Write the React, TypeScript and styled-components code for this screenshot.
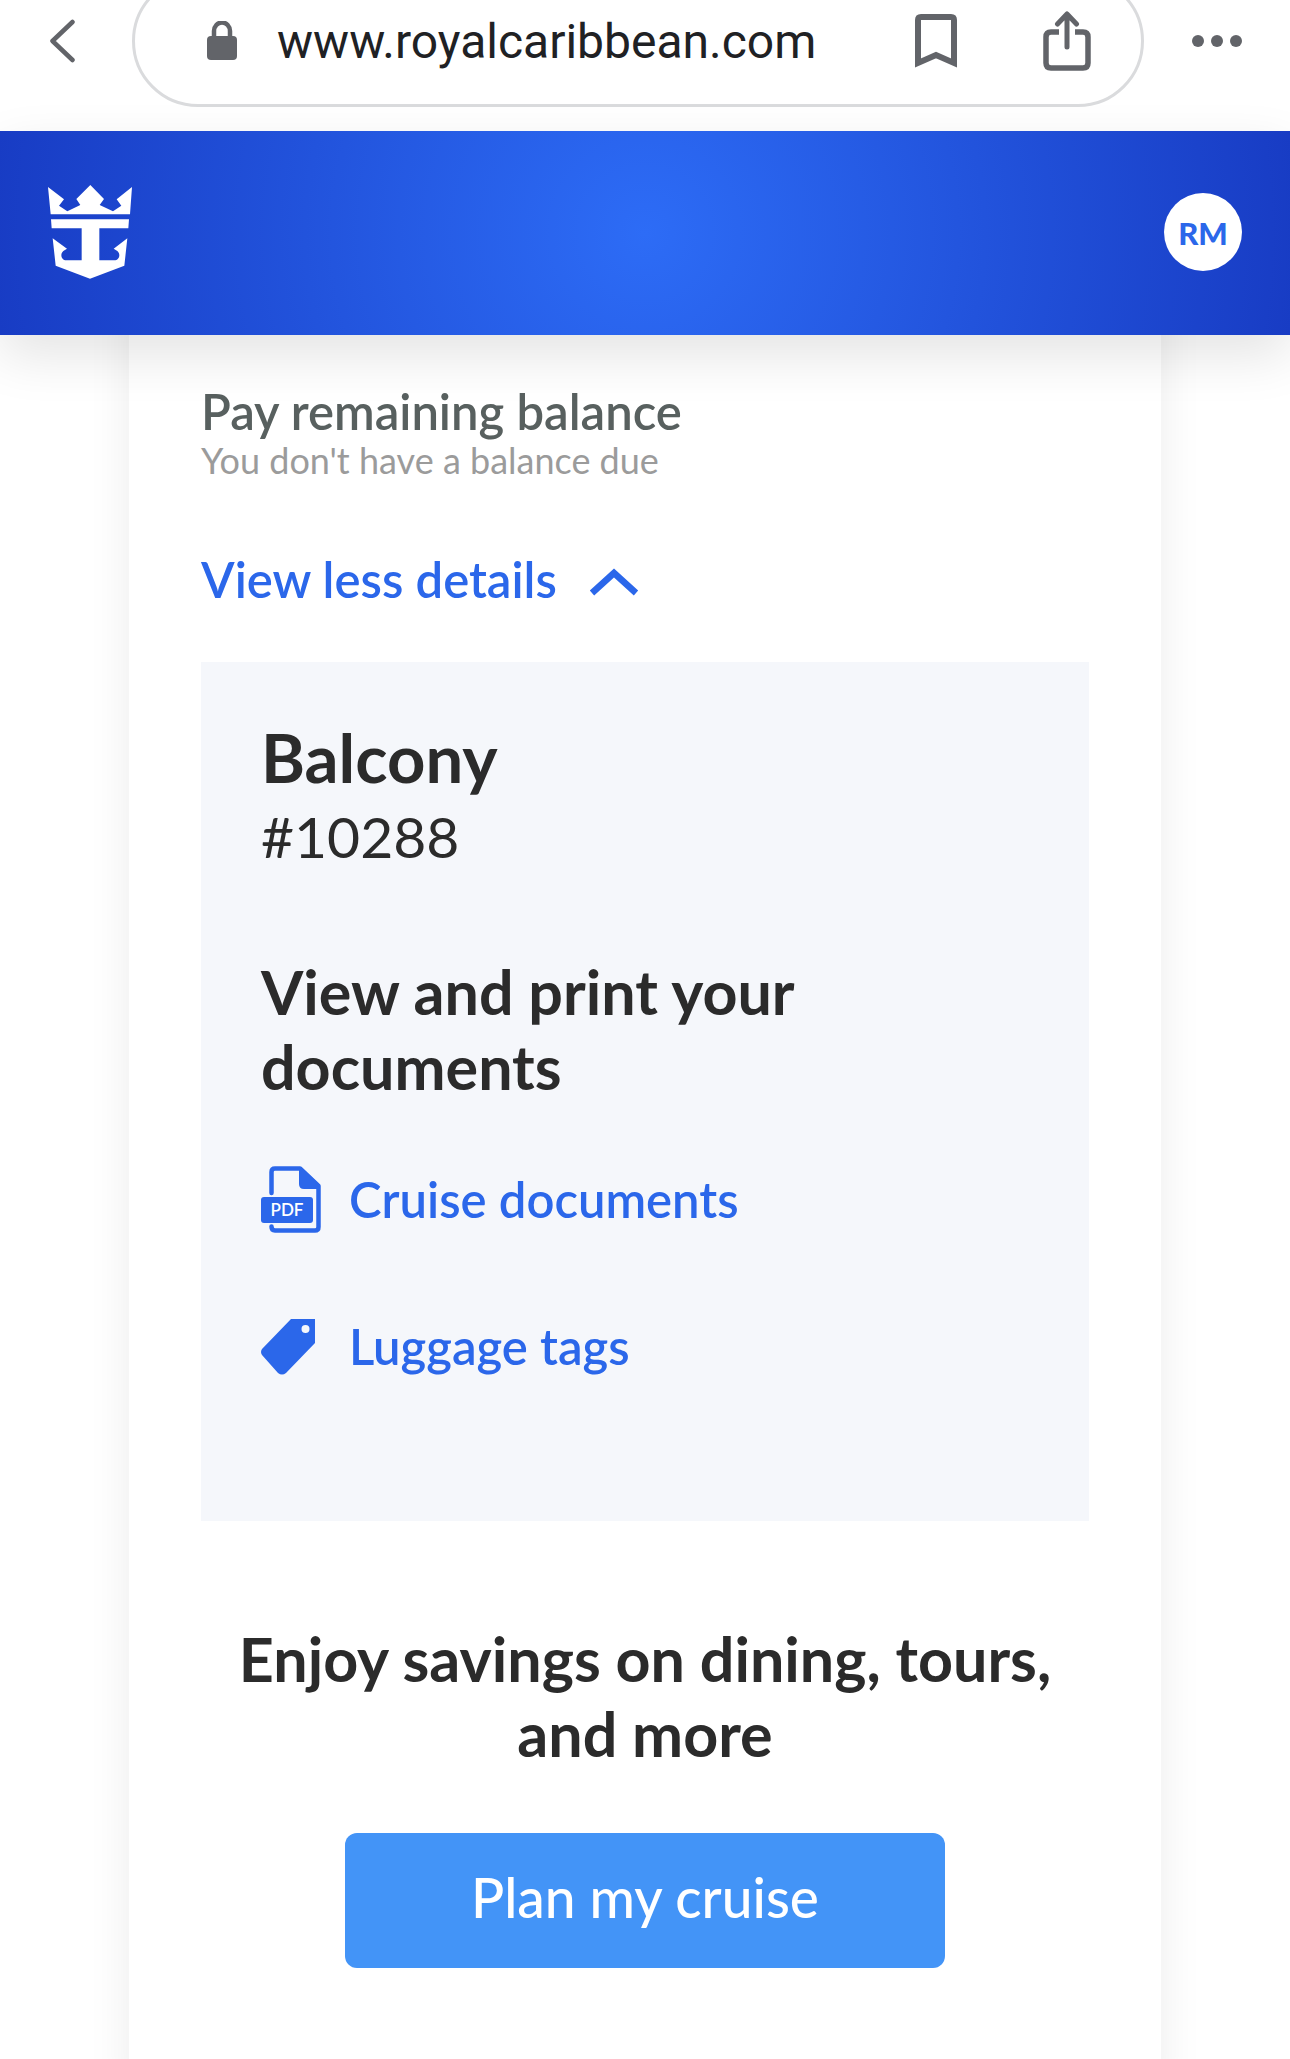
import React from "react";
import styled, { createGlobalStyle } from "styled-components";

const color = {
  link: "#2b67ea",
  ink: "#2b2b2b",
  slate: "#58605f",
  muted: "#9b9b9b",
  chrome: "#626469",
  panel: "#f5f7fb",
  action: "#4394f7",
};

const GlobalStyle = createGlobalStyle`
  * { box-sizing: border-box; }
  body {
    margin: 0;
    background: #fff;
    color: ${color.ink};
    font-family: Lato, "Open Sans", sans-serif;
  }
  button, input { font: inherit; }
  h2, h3, p, ul { margin: 0; padding: 0; }
  svg { display: block; flex: none; }
`;

const Page = styled.div`
  display: flex;
  flex-direction: column;
  min-height: 100vh;
  overflow: hidden;
`;

const BrowserBar = styled.div`
  display: flex;
  align-items: center;
  gap: 48px;
  margin-top: -25px;
  padding: 0 48px 24px;
  color: ${color.chrome};
`;

const IconButton = styled.button`
  display: flex;
  padding: 0;
  border: 0;
  background: none;
  color: inherit;
  cursor: pointer;
`;

const AddressPill = styled.div`
  display: flex;
  flex: 1;
  align-items: center;
  min-width: 0;
  height: 132px;
  padding: 0 50px 0 72px;
  border: 3px solid #dadbdd;
  border-radius: 66px;
`;

const AddressInput = styled.input`
  flex: 1;
  min-width: 0;
  margin: 0 40px;
  padding: 2px 0 0;
  border: 0;
  outline: 0;
  background: none;
  color: #202124;
  font-family: Roboto, sans-serif;
  font-size: 48px;
  line-height: 60px;
`;

const PillActions = styled.div`
  display: flex;
  align-items: center;
  gap: 86px;
`;

const SiteHeader = styled.header`
  position: relative;
  z-index: 1;
  display: flex;
  align-items: center;
  justify-content: space-between;
  height: 204px;
  padding: 0 48px 2px;
  background: radial-gradient(circle, #2d6cf6, #183cc4);
  box-shadow: 0 20px 50px rgba(0, 0, 0, 0.11);
`;

const HomeLink = styled.a`
  display: flex;
  color: #fff;
`;

const Avatar = styled.button`
  width: 78px;
  height: 78px;
  padding: 2px 0 0;
  border: 0;
  border-radius: 50%;
  background: #fff;
  color: ${color.link};
  font-size: 31px;
  font-weight: 900;
  line-height: 36px;
`;

const Card = styled.main`
  flex: 1;
  margin: -40px 10%;
  padding: 88px 72px 132px;
  background: #fff;
  box-shadow: 0 0 40px rgba(0, 0, 0, 0.08);
`;

const BalanceTitle = styled.h3`
  color: ${color.slate};
  font-size: 49px;
  font-weight: 600;
  line-height: 56px;
`;

const BalanceNote = styled.p`
  color: ${color.muted};
  font-size: 36px;
  line-height: 42px;
`;

const DetailsToggle = styled.button`
  display: flex;
  align-items: center;
  gap: 32px;
  margin: 70px 0 55px;
  padding: 0;
  border: 0;
  background: none;
  color: ${color.link};
  font-size: 49px;
  font-weight: 600;
  line-height: 56px;
`;

const DetailsPanel = styled.section`
  padding: 56px 60px 141px;
  background: ${color.panel};
`;

const RoomType = styled.h2`
  font-size: 67px;
  font-weight: 700;
  line-height: 78px;
`;

const RoomNumber = styled.p`
  font-size: 57px;
  line-height: 80px;
`;

const SectionTitle = styled.h3<{ $center?: boolean }>`
  font-size: 61px;
  font-weight: 700;
  line-height: 75px;
  text-align: ${(p) => (p.$center ? "center" : "left")};
`;

const Documents = styled.div`
  margin-top: 78px;
`;

const LinkList = styled.ul`
  display: grid;
  gap: 80px;
  margin-top: 62px;
  list-style: none;
`;

const DocumentLink = styled.a`
  display: grid;
  grid-template-columns: 60px auto;
  gap: 28px;
  align-items: center;
  justify-content: start;
  color: ${color.link};
  font-size: 49px;
  font-weight: 600;
  line-height: 67px;
  text-decoration: none;
`;

const Offer = styled.section`
  display: flex;
  flex-direction: column;
  align-items: center;
  gap: 62px;
  margin-top: 100px;
`;

const ActionButton = styled.button`
  width: 600px;
  max-width: 100%;
  height: 135px;
  padding: 0 24px 8px;
  border: 0;
  border-radius: 12px;
  background: ${color.action};
  color: #fff;
  font-size: 55px;
  font-weight: 500;
`;

function BackIcon() {
  return (
    <svg width="36" height="44" viewBox="0 0 36 44" fill="none" stroke="currentColor" strokeWidth="4.5" strokeLinecap="round" strokeLinejoin="round" aria-hidden="true">
      <path d="M24.500 3 4.500 22l20 19" />
    </svg>
  );
}

function LockIcon() {
  return (
    <svg width="30" height="40" viewBox="0 0 30 40" aria-hidden="true">
      <path d="M7 18v-8a8 8.500 0 0 1 16 0v8" fill="none" stroke="currentColor" strokeWidth="4.5" />
      <rect y="15" width="30" height="24" rx="4" fill="currentColor" />
    </svg>
  );
}

function BookmarkIcon() {
  return (
    <svg width="42" height="56" viewBox="0 0 42 56" fill="none" stroke="currentColor" strokeWidth="6" aria-hidden="true">
      <path d="M3 50V7q0-3 3-3h30q3 0 3 3v43L21 42z" />
    </svg>
  );
}

function ShareIcon() {
  return (
    <svg width="48" height="60" viewBox="0 0 48 60" fill="none" stroke="currentColor" strokeWidth="5.5" strokeLinejoin="round" aria-hidden="true">
      <path d="M16 21H8q-5 0-5 5v26q0 5 5 5h32q5 0 5-5V26q0-5-5-5h-8" />
      <path d="M24 36V4M14.500 13 24 3l9.500 10" strokeWidth="5" strokeLinecap="round" />
    </svg>
  );
}

function MoreIcon() {
  return (
    <svg width="50" height="14" viewBox="0 0 50 14" fill="currentColor" aria-hidden="true">
      <circle cx="6" cy="7" r="6" />
      <circle cx="25" cy="7" r="6" />
      <circle cx="44" cy="7" r="6" />
    </svg>
  );
}

function CrownAnchorLogo() {
  return (
    <svg width="84" height="94" viewBox="0 0 252 282" fill="currentColor" aria-hidden="true">
      <path d="M0 6 48 43 33 62 58 79 97 60 85 42 127 0l41 42-13 18 40 19 25-17-14-19 46-37-6 82H8z" />
      <path d="M9 103h234l-2 27h-87v96h45c15 0 20-19 9-28l-11-7 41-31-9 82-103 39-103-39-9-82 43 31-11 7c-11 9-6 28 9 28h46v-96H11z" />
    </svg>
  );
}

function ChevronUpIcon() {
  return (
    <svg width="50" height="34" viewBox="0 0 50 34" fill="none" stroke="currentColor" strokeWidth="6.5" aria-hidden="true">
      <path d="M3 31 25 11l22 20" />
    </svg>
  );
}

function PdfIcon() {
  return (
    <svg width="60" height="67" viewBox="0 0 60 67" aria-hidden="true">
      <path d="M10.500 27V6q0-3.500 3.500-3.500h25L57.500 20v41q0 3.500-3.500 3.500H14q-3.500 0-3.500-4" fill="none" stroke="currentColor" strokeWidth="4.500" strokeLinecap="round" strokeLinejoin="round" />
      <path d="M38 2h3l18 17v4H43q-5 0-5-5z" fill="currentColor" />
      <rect y="31" width="52" height="26" rx="3" fill="currentColor" />
      <text x="26" y="50" fill="#fff" fontSize="17" fontWeight="600" textAnchor="middle">PDF</text>
    </svg>
  );
}

function TagIcon() {
  return (
    <svg width="54" height="56" viewBox="0 0 54 56" fill="currentColor" aria-hidden="true">
      <path fillRule="evenodd" d="M30 0h24v24L25 54q-4 3-8 0L1 36q-2-3 0-6zM44.500 6a4 4 0 1 0 0 8 4 4 0 0 0 0-8z" />
    </svg>
  );
}

export default function App() {
  return (
    <>
      <GlobalStyle />
      <Page>
        <BrowserBar>
          <IconButton aria-label="Back"><BackIcon /></IconButton>
          <AddressPill>
            <LockIcon />
            <AddressInput aria-label="Address" defaultValue="www.royalcaribbean.com" />
            <PillActions>
              <IconButton aria-label="Bookmark"><BookmarkIcon /></IconButton>
              <IconButton aria-label="Share"><ShareIcon /></IconButton>
            </PillActions>
          </AddressPill>
          <IconButton aria-label="More"><MoreIcon /></IconButton>
        </BrowserBar>
        <SiteHeader>
          <HomeLink href="#home" aria-label="Royal Caribbean home"><CrownAnchorLogo /></HomeLink>
          <Avatar aria-label="RM account">RM</Avatar>
        </SiteHeader>
        <Card>
          <BalanceTitle>Pay remaining balance</BalanceTitle>
          <BalanceNote>You don't have a balance due</BalanceNote>
          <DetailsToggle aria-expanded="true">
            View less details
            <ChevronUpIcon />
          </DetailsToggle>
          <DetailsPanel>
            <RoomType>Balcony</RoomType>
            <RoomNumber>#10288</RoomNumber>
            <Documents>
              <SectionTitle>View and print your documents</SectionTitle>
              <LinkList>
                <li><DocumentLink href="#cruise-documents"><PdfIcon />Cruise documents</DocumentLink></li>
                <li><DocumentLink href="#luggage-tags"><TagIcon />Luggage tags</DocumentLink></li>
              </LinkList>
            </Documents>
          </DetailsPanel>
          <Offer>
            <SectionTitle $center>Enjoy savings on dining, tours, and more</SectionTitle>
            <ActionButton>Plan my cruise</ActionButton>
          </Offer>
        </Card>
      </Page>
    </>
  );
}
